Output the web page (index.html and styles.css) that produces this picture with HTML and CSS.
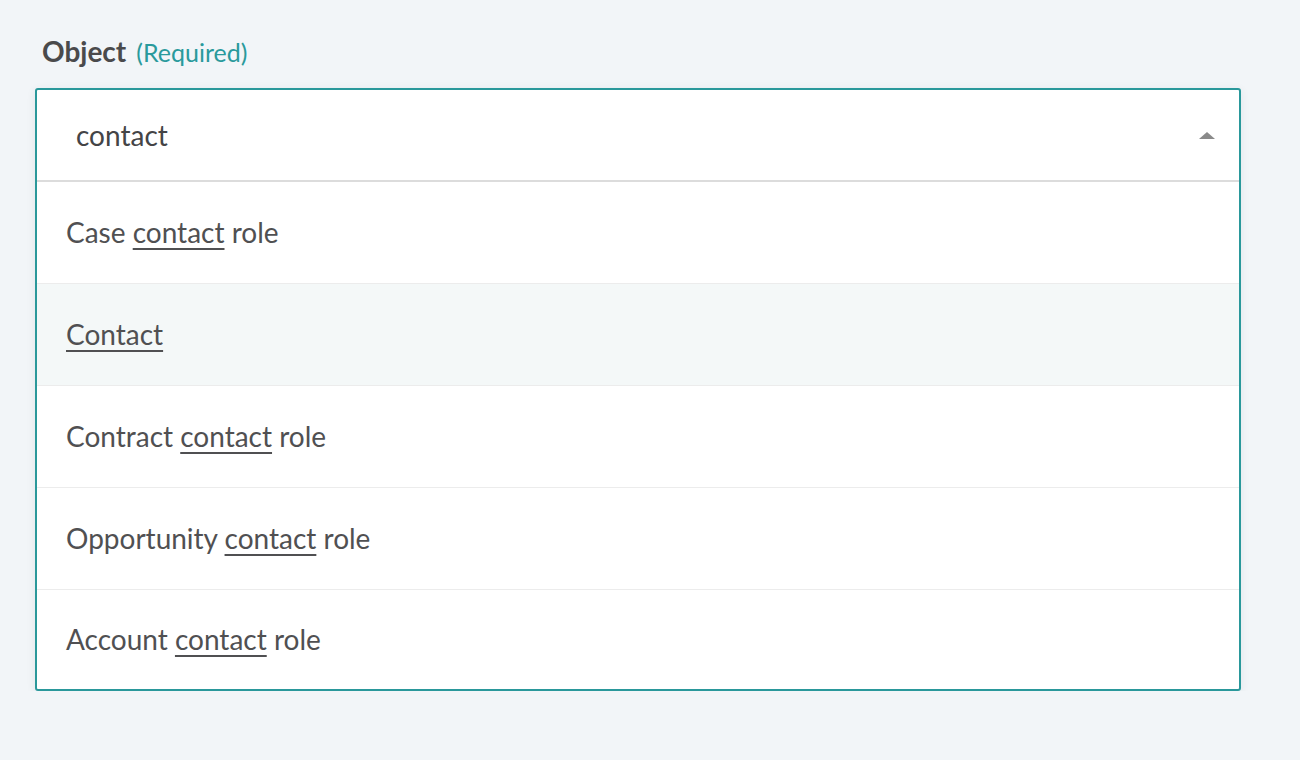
FILE: index.html
```html
<!DOCTYPE html>
<html>
<head>
<meta charset="utf-8">
<link rel="stylesheet" href="styles.css">
</head>
<body>
<div class="field">
  <div class="label"><span class="name">Object</span><span class="req">(Required)</span></div>
  <div class="select">
    <div class="input">
      <span class="value">contact</span>
      <span class="arrow"></span>
    </div>
    <ul class="options">
      <li class="option">Case <u>contact</u> role</li>
      <li class="option active"><u>Contact</u></li>
      <li class="option">Contract <u>contact</u> role</li>
      <li class="option">Opportunity <u>contact</u> role</li>
      <li class="option">Account <u>contact</u> role</li>
    </ul>
  </div>
</div>
</body>
</html>
```
FILE: styles.css
```css
html, body {
  margin: 0;
  padding: 0;
  background: #f2f5f8;
  font-family: Lato, "Open Sans", sans-serif;
  color: #4d4d4f;
}
.field {
  padding: 34px 0 0 35px;
  width: 1206px;
}
.label {
  display: flex;
  align-items: baseline;
  padding-left: 7px;
  height: 54px;
}
.name {
  font-size: 28px;
  font-weight: 700;
  color: #4a4a4c;
}
.req {
  margin-left: 10px;
  font-size: 25px;
  color: #2a9a9c;
}
.select {
  border: 2px solid #2a989b;
  border-radius: 3px;
  background: #fff;
  box-shadow: 0 2px 10px rgba(40, 60, 80, 0.08);
}
.input {
  height: 90px;
  border-bottom: 2px solid #dcdcdc;
  display: flex;
  align-items: center;
  justify-content: space-between;
  padding: 0 24px 0 39px;
}
.value {
  font-size: 28px;
  color: #444446;
}
.arrow {
  width: 0;
  height: 0;
  border-left: 8px solid transparent;
  border-right: 8px solid transparent;
  border-bottom: 7px solid #8a8a8a;
}
.options {
  list-style: none;
  margin: 0;
  padding: 0;
}
.option {
  box-sizing: border-box;
  height: 102px;
  border-top: 1px solid #ececec;
  display: flex;
  align-items: center;
  padding-left: 29px;
  padding-bottom: 1px;
  font-size: 28px;
  white-space: pre;
  color: #505052;
}
.option:first-child {
  border-top: none;
  height: 101px;
}
.option:last-child {
  height: 100px;
}
.option.active {
  background: #f4f8f8;
}
.option u {
  text-decoration: underline;
  text-decoration-thickness: 2px;
  text-underline-offset: 5px;
}
```
